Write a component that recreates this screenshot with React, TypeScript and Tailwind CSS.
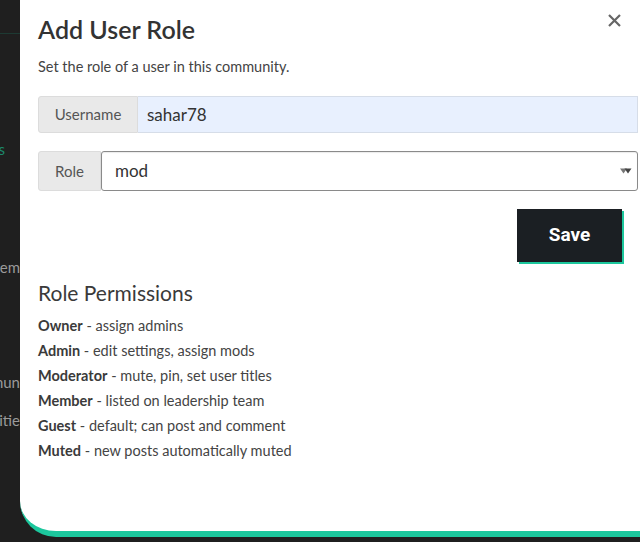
import React from "react";

const perms: [string, string][] = [
  ["Owner", "assign admins"],
  ["Admin", "edit settings, assign mods"],
  ["Moderator", "mute, pin, set user titles"],
  ["Member", "listed on leadership team"],
  ["Guest", "default; can post and comment"],
  ["Muted", "new posts automatically muted"],
];

export default function App() {
  return (
    <div
      className="w-[640px] h-[542px] bg-[#1f1f1f] overflow-hidden flex items-start"
      style={{ fontFamily: "Lato, 'Noto Sans', sans-serif" }}
    >
      <div className="w-[20px] shrink-0 h-full relative overflow-hidden">
        <div className="absolute left-0 top-[33px] w-[20px] h-px bg-[#1d3a33]" />
        <div className="absolute right-[15px] top-[138px] text-[15px] text-[#1c8a6c] whitespace-nowrap">ss</div>
        <div className="absolute right-0 top-[256px] text-[15px] text-[#9a9a9a] whitespace-nowrap">dem</div>
        <div className="absolute right-0 top-[371px] text-[15px] text-[#9a9a9a] whitespace-nowrap">mun</div>
        <div className="absolute right-0 top-[409px] text-[15px] text-[#9a9a9a] whitespace-nowrap">itie</div>
      </div>
      <div className="flex-1 h-[537px] bg-white rounded-bl-[36px] border-b-[6px] border-[#1cc79d] relative">
        <button className="absolute right-[18px] top-[12px] w-[16px] h-[16px] flex items-center justify-center">
          <svg width="13" height="13" viewBox="0 0 13 13">
            <path d="M1 1L12 12M12 1L1 12" stroke="#666" strokeWidth="2.2" strokeLinecap="butt" />
          </svg>
        </button>
        <div className="pl-[18px] pr-[2px] pt-[12px]">
          <h1 className="text-[25px] leading-[34px] font-semibold text-[#333]">Add User Role</h1>
          <p className="mt-[11px] text-[14.5px] leading-[20px] text-[#444]">Set the role of a user in this community.</p>
          <div className="mt-[19px] flex h-[37px]">
            <div className="w-[100px] bg-[#e9e9e9] border border-[#dcdcdc] rounded-l-[3px] flex items-center justify-center text-[15px] text-[#555]">
              Username
            </div>
            <div className="flex-1 bg-[#e8f0fe] border border-[#d6dde8] border-l-0 flex items-center pl-[9px] text-[17px] text-[#333]">
              sahar78
            </div>
          </div>
          <div className="mt-[18px] flex h-[40px]">
            <div className="w-[63px] bg-[#e9e9e9] border border-[#dcdcdc] rounded-l-[3px] flex items-center justify-center text-[15px] text-[#555]">
              Role
            </div>
            <div className="flex-1 bg-white border border-[#8a8a8a] rounded-[3px] flex items-center justify-between pl-[13px] pr-[5px] text-[17px] text-[#333] shadow-[inset_0_1px_1px_rgba(0,0,0,0.08)]">
              <span>mod</span>
              <svg width="12" height="8" viewBox="0 0 12 8">
                <path d="M0 1.5H7L3.5 6.5Z" fill="#777" />
                <path d="M4.5 1.5H11.5L8 6.5Z" fill="#444" />
              </svg>
            </div>
          </div>
          <div className="mt-[18px] flex justify-end pr-[16px]">
            <button
              className="w-[105px] h-[53px] bg-[#1b1f23] text-white text-[19px] font-bold shadow-[2px_2px_0_#1cc79d]"
              style={{ fontFamily: "Roboto, sans-serif" }}
            >
              Save
            </button>
          </div>
          <h2 className="mt-[17px] text-[21px] leading-[28px] text-[#3a3a3a]">Role Permissions</h2>
          <ul className="mt-[6px] text-[14.5px] leading-[25px] text-[#444]">
            {perms.map(([k, v]) => (
              <li key={k}>
                <span className="font-bold text-[#3a3a3a]">{k}</span> - {v}
              </li>
            ))}
          </ul>
        </div>
      </div>
    </div>
  );
}
